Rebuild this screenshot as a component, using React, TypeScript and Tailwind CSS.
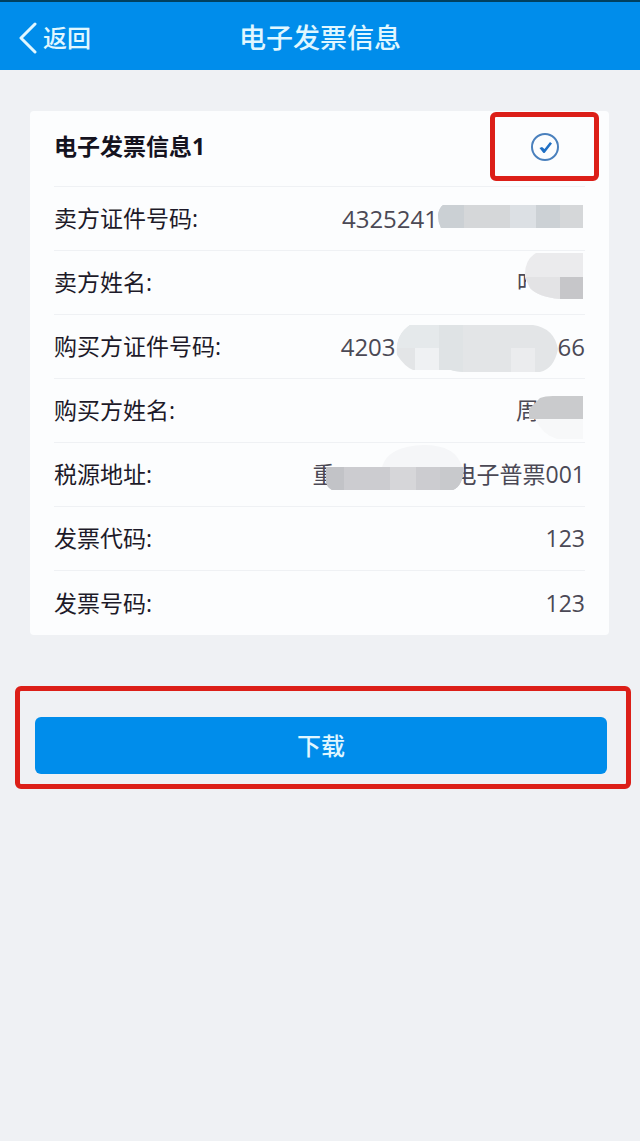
import { useState, type ReactNode } from "react";

interface InvoiceField {
  label: string;
  value: ReactNode;
}

function SellerIdMask() {
  return (
    <svg className="-my-1 mr-0.5 h-16 w-[145px] shrink-0" viewBox="0 0 145 64" aria-hidden="true">
      <clipPath id="seller-id">
        <path d="M5 18H145V41H3Q0 35 0 28Q1 21 5 18Z" />
      </clipPath>
      <g clipPath="url(#seller-id)">
        <rect width="145" height="64" fill="#d5d7d9" />
        <rect width="26" height="64" fill="#cbd0d4" />
        <rect x="72" width="26" height="64" fill="#dce0e4" />
        <rect x="98" width="24" height="64" fill="#ccd1d5" />
      </g>
    </svg>
  );
}

function SellerNameMask() {
  return (
    <svg className="relative -my-1 mr-0.5 -ml-4.5 h-16 w-[61px] shrink-0" viewBox="0 0 61 64" aria-hidden="true">
      <path d="M4 12H20V46H4Z" fill="#fcfdfe" />
      <path d="M14 2H61V48H38Q16 46 8 37L3 26Q2 9 14 2Z" fill="#ebebed" />
      <path d="M3 26H38V48Q16 46 8 37Z" fill="#e3e3e5" />
      <rect x="38" y="26" width="23" height="22" fill="#c6c6c9" />
    </svg>
  );
}

function BuyerIdMask() {
  return (
    <svg className="relative -my-1 h-16 w-[162px] shrink-0" viewBox="0 0 162 64" aria-hidden="true">
      <clipPath id="buyer-id">
        <path d="M14 10H137Q158 13 162 34Q158 54 144 57H72Q62 57 55 55H17Q9 52 1 40Q-1 20 14 10Z" />
      </clipPath>
      <g clipPath="url(#buyer-id)">
        <rect width="162" height="64" fill="#e3e5e7" />
        <rect width="43" height="33" fill="#e5e9eb" />
        <rect x="19" y="33" width="24" height="31" fill="#eff1f3" />
        <rect x="43" y="10" width="24" height="47" fill="#dfe3e5" />
        <rect x="115" y="33" width="24" height="31" fill="#ebecee" />
      </g>
    </svg>
  );
}

function BuyerNameMask() {
  return (
    <svg className="relative -my-1 mr-0.5 -ml-3 h-16 w-[56px] shrink-0" viewBox="0 0 56 64" aria-hidden="true">
      <path d="M8 40H56V60H30Q16 56 8 40Z" fill="#f7f8f9" />
      <path d="M13 19Q18 17 26 17H56V40H2V30Z" fill="#cacbcd" />
    </svg>
  );
}

function AddressMask() {
  return (
    <svg className="relative -my-1 -mr-2.5 -ml-2.5 h-16 w-[138px] shrink-0" viewBox="0 0 138 64" aria-hidden="true">
      <path d="M56 24Q62 3 98 2Q130 2 136 24Z" fill="#f5f6f8" />
      <clipPath id="address">
        <path d="M0 24H138Q137 43 127 47H6Q0 44 0 37Z" />
      </clipPath>
      <g clipPath="url(#address)">
        <rect width="138" height="64" fill="#ccccd0" />
        <rect width="18" height="64" fill="#c2c3c7" />
        <rect x="64" width="26" height="64" fill="#d6d6d9" />
        <rect x="114" width="24" height="64" fill="#c8c9cc" />
      </g>
    </svg>
  );
}

const fields: InvoiceField[] = [
  {
    label: "卖方证件号码:",
    value: (
      <>
        <span className="text-2xl">4325241</span>
        <SellerIdMask />
      </>
    ),
  },
  {
    label: "卖方姓名:",
    value: (
      <>
        叶
        <SellerNameMask />
      </>
    ),
  },
  {
    label: "购买方证件号码:",
    value: (
      <>
        <span className="text-2xl">4203</span>
        <BuyerIdMask />
        <span className="text-2xl">66</span>
      </>
    ),
  },
  {
    label: "购买方姓名:",
    value: (
      <>
        周
        <BuyerNameMask />
      </>
    ),
  },
  {
    label: "税源地址:",
    value: (
      <>
        重
        <AddressMask />
        电子普票001
      </>
    ),
  },
  { label: "发票代码:", value: "123" },
  { label: "发票号码:", value: "123" },
];

export default function App() {
  const [selected, setSelected] = useState(true);

  return (
    <div className="min-h-screen bg-[#eff1f4] font-['Open_Sans','Noto_Sans_CJK_SC',sans-serif]">
      <header className="grid h-[70px] grid-cols-[1fr_auto_1fr] items-center border-t-2 border-[#00405f] bg-[#008deb] pt-1 text-[#e0f7ff]">
        <a href="#" className="flex items-center gap-1.5 justify-self-start pl-[18px] text-2xl font-medium">
          <svg className="h-8 w-[19px]" viewBox="0 0 19 32" fill="none" aria-hidden="true">
            <path d="M17 2L3 16L17 30" stroke="currentColor" strokeWidth="3" strokeLinecap="round" strokeLinejoin="round" />
          </svg>
          返回
        </a>
        <h1 className="text-[27px] font-medium">电子发票信息</h1>
      </header>

      <main className="pt-[41px]">
        <section className="mr-[31px] ml-[30px] rounded-sm bg-[#fcfdfe] px-6">
          <div className="flex h-[76px] items-center justify-between border-b border-[#eff1f4] pb-1">
            <h2 className="text-[23px] font-bold text-[#15131f]">电子发票信息1</h2>
            <div className="-mr-3.5 grid h-[69px] w-[109px] place-items-center rounded-md border-[5px] border-[#dc1f18]">
              <input
                type="checkbox"
                aria-label="电子发票信息1"
                checked={selected}
                onChange={(e) => setSelected(e.target.checked)}
                className="peer col-start-1 row-start-1 size-7 appearance-none rounded-full border-2 border-[#4a80bd]"
              />
              <svg
                className="pointer-events-none invisible col-start-1 row-start-1 size-7 peer-checked:visible"
                viewBox="0 0 28 28"
                aria-hidden="true"
              >
                <path d="M8.5 15L11 14L13.5 16L19 9L21 10.5L14 19.5Q13 20.5 12 19.5Z" fill="#1f6fc4" />
              </svg>
            </div>
          </div>

          <dl>
            {fields.map((field) => (
              <div
                key={field.label}
                className="flex h-16 items-center justify-between border-b border-[#eff1f4] last:border-b-0"
              >
                <dt className="text-[23px] text-[#1d1a29]">{field.label}</dt>
                <dd className="flex items-center text-[23px] text-[#4b4955]">{field.value}</dd>
              </div>
            ))}
          </dl>
        </section>

        <div className="mt-[51px] mr-[9px] ml-[15px] rounded-md border-[5px] border-[#dc1f18] pt-[26px] pr-[19px] pb-[10px] pl-[15px]">
          <button
            type="button"
            className="h-[57px] w-full rounded-md bg-[#008deb] text-2xl font-medium text-[#e0f7ff]"
          >
            下载
          </button>
        </div>
      </main>
    </div>
  );
}
